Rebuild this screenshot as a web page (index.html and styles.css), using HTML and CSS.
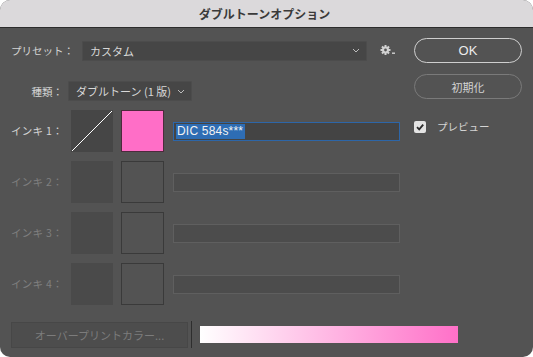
FILE: index.html
```html
<!DOCTYPE html>
<html lang="ja">
<head>
<meta charset="utf-8">
<title>ダブルトーンオプション</title>
<link rel="stylesheet" href="styles.css">
</head>
<body>
<div class="window">
  <header class="titlebar">ダブルトーンオプション</header>
  <div class="content">
    <div class="top">
      <div class="main">
        <div class="preset-row">
          <span class="label preset-label">プリセット：</span>
          <div class="select preset-select">
            <span>カスタム</span>
            <svg class="chev" width="8" height="5" viewBox="0 0 8 5"><path d="M1 1 L4 4 L7 1" fill="none" stroke="#bdbdbd" stroke-width="1"/></svg>
          </div>
          <svg class="gear" width="16" height="12" viewBox="0 0 16 12">
            <g fill="#d2d2d2">
              <circle cx="5.5" cy="6" r="3.4"/>
              <rect x="4.5" y="1" width="2" height="10"/>
              <rect x="0.5" y="5" width="10" height="2"/>
              <rect x="4.5" y="1" width="2" height="10" transform="rotate(45 5.5 6)"/>
              <rect x="4.5" y="1" width="2" height="10" transform="rotate(-45 5.5 6)"/>
              <rect x="12" y="8.5" width="3" height="1.4"/>
            </g>
            <circle cx="5.5" cy="6" r="1.4" fill="#535353"/>
          </svg>
        </div>
        <div class="type-row">
          <span class="label row-label">種類：</span>
          <div class="select type-select">
            <span>ダブルトーン (1 版)</span>
            <svg class="chev" width="8" height="5" viewBox="0 0 8 5"><path d="M1 1 L4 4 L7 1" fill="none" stroke="#bdbdbd" stroke-width="1"/></svg>
          </div>
        </div>
        <div class="inks">
          <div class="ink">
            <span class="label row-label">インキ 1：</span>
            <div class="curve curve-active">
              <svg width="42" height="42" viewBox="0 0 42 42"><line x1="1" y1="41" x2="41" y2="1" stroke="#ffffff" stroke-width="1"/></svg>
            </div>
            <div class="swatch swatch-pink"></div>
            <div class="field field-active"><span class="sel">DIC 584s***</span></div>
          </div>
          <div class="ink dim">
            <span class="label row-label">インキ 2：</span>
            <div class="curve"></div>
            <div class="swatch"></div>
            <div class="field"></div>
          </div>
          <div class="ink dim">
            <span class="label row-label">インキ 3：</span>
            <div class="curve"></div>
            <div class="swatch"></div>
            <div class="field"></div>
          </div>
          <div class="ink dim">
            <span class="label row-label">インキ 4：</span>
            <div class="curve"></div>
            <div class="swatch"></div>
            <div class="field"></div>
          </div>
        </div>
      </div>
      <div class="side">
        <button class="btn btn-ok">OK</button>
        <button class="btn btn-reset">初期化</button>
        <label class="check-row">
          <span class="checkbox">
            <svg width="10" height="10" viewBox="0 0 10 10"><path d="M2 5.2 L4.2 7.4 L8.2 2.6" fill="none" stroke="#2b2b2b" stroke-width="1.8"/></svg>
          </span>
          <span class="label">プレビュー</span>
        </label>
      </div>
    </div>
    <div class="bottom">
      <div class="overprint">オーバープリントカラー...</div>
      <div class="divider"></div>
      <div class="gradient"></div>
    </div>
  </div>
</div>
</body>
</html>
```

FILE: styles.css
```css
* { box-sizing: border-box; }
html, body {
  margin: 0;
  padding: 0;
  background: #ffffff;
}
body {
  width: 533px;
  height: 357px;
  overflow: hidden;
  font-family: "Noto Sans CJK JP", "Noto Sans", sans-serif;
}
.window {
  width: 533px;
  height: 357px;
  border-radius: 10px;
  overflow: hidden;
  background: #535353;
  display: flex;
  flex-direction: column;
}
.titlebar {
  height: 28px;
  flex: none;
  background: #dbd9db;
  border-bottom: 1px solid #2c2c2c;
  color: #3a3a3a;
  font-weight: bold;
  font-size: 12px;
  display: flex;
  align-items: center;
  justify-content: center;
  padding-bottom: 1px;
  padding-right: 4px;
}
.content {
  padding-top: 10px;
}
.top {
  display: flex;
}
.main {
  width: 414px;
  flex: none;
}
.label {
  color: #d4d4d4;
  font-size: 10.5px;
  white-space: nowrap;
}
.preset-row {
  height: 25px;
  display: flex;
  align-items: center;
  padding-left: 11px;
}
.preset-label {
  width: 71px;
}
.select {
  height: 20px;
  background: #464646;
  border: 1px solid #4c4c4c;
  border-radius: 1px;
  display: flex;
  align-items: center;
  justify-content: space-between;
  color: #d8d8d8;
  font-size: 11px;
  padding: 0 6px 0 7px;
}
.preset-select {
  width: 285px;
}
.gear {
  margin-left: 13px;
  margin-top: -1px;
}
.type-row {
  margin-top: 18px;
  height: 20px;
  display: flex;
  align-items: center;
}
.row-label {
  width: 63px;
  text-align: right;
}
.type-select {
  margin-left: 5px;
  width: 124px;
  padding-left: 7px;
}
.inks {
  margin-top: 9px;
  display: flex;
  flex-direction: column;
  gap: 9px;
}
.ink {
  height: 42px;
  display: flex;
  align-items: center;
}
.ink .row-label {
  margin-top: -1px;
  letter-spacing: 0.3px;
}
.ink.dim .label {
  color: #7f7f7f;
}
.curve {
  width: 42px;
  height: 42px;
  margin-left: 8px;
  background: #4a4a4a;
}
.curve-active {
  background: #464646;
}
.curve svg { display: block; }
.swatch {
  width: 43px;
  height: 42px;
  margin-left: 8px;
  background: #535353;
  border: 1px solid #3a3a3a;
}
.swatch-pink {
  background: #ff6ec7;
  border-color: #4e2a3d;
}
.field {
  margin-left: 9px;
  width: 227px;
  height: 19px;
  background: #4c4c4c;
  border: 1px solid #5f5f5f;
}
.field-active {
  background: #444444;
  border: 1px solid #2d66a8;
  padding: 1px 2px;
  display: flex;
  align-items: center;
}
.sel {
  background: #2e6db4;
  color: #f2f2f2;
  font-family: "Liberation Sans", Arial, sans-serif;
  font-size: 12px;
  line-height: 15px;
  padding: 0 2px 0 1px;
  letter-spacing: 0.2px;
}
.side {
  width: 108px;
  flex: none;
  display: flex;
  flex-direction: column;
}
.btn {
  width: 108px;
  height: 25px;
  border-radius: 13px;
  background: transparent;
  font-family: "Noto Sans CJK JP", "Noto Sans", sans-serif;
  padding: 0;
  display: flex;
  align-items: center;
  justify-content: center;
}
.btn-ok {
  border: 1.5px solid #cfcfcf;
  color: #ececec;
  font-size: 13px;
  font-family: "Liberation Sans", Arial, sans-serif;
}
.btn-reset {
  margin-top: 11px;
  border: 1px solid #7a7a7a;
  color: #d4d4d4;
  font-size: 11px;
}
.check-row {
  margin-top: 20px;
  display: flex;
  align-items: center;
  gap: 11px;
}
.checkbox {
  width: 12px;
  height: 12px;
  border-radius: 2px;
  background: #e4e4e4;
  display: flex;
  align-items: center;
  justify-content: center;
}
.checkbox svg { display: block; }
.bottom {
  margin-top: 16px;
  padding-left: 11px;
  display: flex;
  align-items: center;
}
.overprint {
  width: 177px;
  height: 26px;
  background: #4d4d4d;
  border: 1px solid #474747;
  color: #7c7c7c;
  font-size: 11px;
  display: flex;
  align-items: center;
  justify-content: center;
}
.divider {
  margin-left: 3px;
  width: 1px;
  height: 27px;
  background: #2e2e2e;
}
.gradient {
  margin-left: 8px;
  width: 258px;
  height: 17px;
  background: linear-gradient(to right, #ffffff, #ff70c8);
}
```
